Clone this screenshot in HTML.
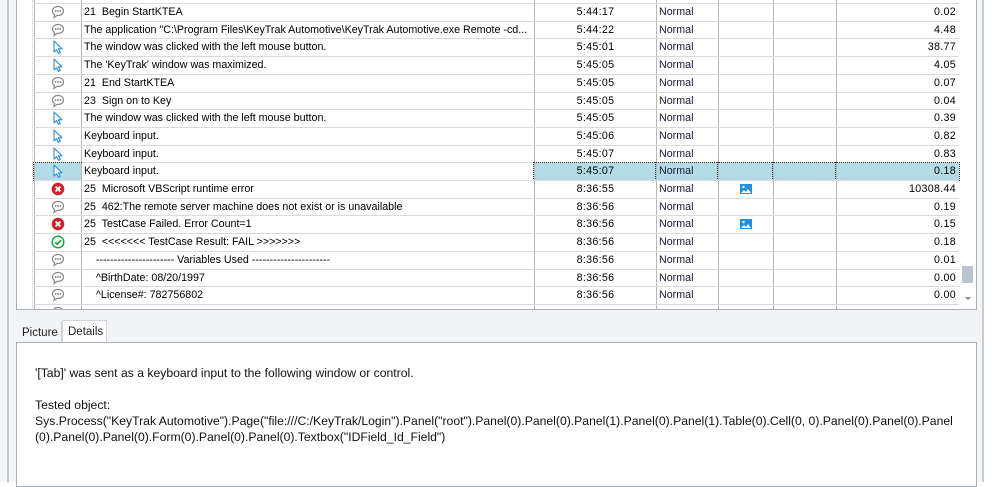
<!DOCTYPE html>
<html><head><style>
*{margin:0;padding:0;box-sizing:border-box}
body{width:999px;height:482px;background:#fff;position:relative;overflow:hidden;font-family:"Liberation Sans",sans-serif;font-size:10.7px;color:#000}
.bg{position:absolute;left:0;top:0;width:984px;height:482px;background:#f3f4f6;border-right:2px solid #c9ccd2}
.vl{position:absolute;left:7px;top:0;width:2px;height:482px;background:#c9ccd2}
.grid{position:absolute;left:16px;top:0;width:961px;height:310px;background:#fff;border:1px solid #a9b0ba;border-top:none;overflow:hidden}
.tree{position:absolute;left:0;top:0;width:16px;height:310px;background:#fff;border-right:1px dotted #ccc}
.r{position:absolute;left:17px;width:925px;height:18px;border-top:1px solid #dadada}
.r div{position:absolute;top:0;height:17px;line-height:17px;border-left:1px solid #b8b8b8;white-space:nowrap;overflow:hidden;text-overflow:ellipsis}
.c0{left:0;width:47px;border-left:1px solid #b8b8b8;text-align:center}
.c1{left:47px;width:453px;padding-left:2px;padding-right:6px}
.c2{left:500px;width:122px;text-align:center;letter-spacing:.3px}
.c3{left:622px;width:62px;padding-left:2px;color:#1a1a3a}
.c4{left:684px;width:55px;text-align:center}
.c5{left:739px;width:63px}
.c6{left:802px;width:123px;text-align:right;padding-right:3px;letter-spacing:.3px}
.sel{background:#b3dce6;outline:1px dotted #333}
.tabs{position:absolute;top:320px;height:23px;font-size:11.5px;line-height:22px}
.det{position:absolute;left:16px;top:342px;width:961px;height:145px;background:#fff;border:1px solid #a9b0ba;font-size:12.2px;color:#111;padding:22px 18px;line-height:16px}
</style></head><body>
<div class="bg"></div><div class="vl"></div>
<div class="grid">
<div class="tree"></div>
<svg width="0" height="0" style="position:absolute"><defs>
<symbol id="b" viewBox="0 0 14 14"><path d="M7 1.5C3.6 1.5 1.5 3.4 1.5 6c0 1.5.8 2.7 2 3.5L3 12.5 6.2 10.4H7c3.4 0 5.5-1.9 5.5-4.4S10.4 1.5 7 1.5z" fill="#fff" stroke="#888" stroke-width="1.2"/><circle cx="4.6" cy="6" r=".9" fill="#777"/><circle cx="7" cy="6" r=".9" fill="#777"/><circle cx="9.4" cy="6" r=".9" fill="#777"/></symbol>
<symbol id="m" viewBox="0 0 14 14"><path d="M3 1v11l2.6-2.4 1.9 3.8 1.8-.9-1.9-3.7H11z" fill="#fff" stroke="#2a8ee0" stroke-width="1.1" stroke-linejoin="round"/></symbol>
<symbol id="x" viewBox="0 0 14 14"><circle cx="7" cy="7" r="6.3" fill="#d0202a"/><path d="M4.6 4.6l4.8 4.8M9.4 4.6l-4.8 4.8" stroke="#fff" stroke-width="2"/></symbol>
<symbol id="k" viewBox="0 0 14 14"><circle cx="7" cy="7" r="5.8" fill="#fff" stroke="#1fa83a" stroke-width="1.5"/><path d="M4.2 7.2l2 2 3.8-4" stroke="#1fa83a" stroke-width="1.8" fill="none"/></symbol>
<symbol id="p" viewBox="0 0 12 10"><rect width="12" height="10" fill="#1e90e0"/><circle cx="3.5" cy="3" r="1.2" fill="#fff"/><path d="M1 9l3-3 2 2 2-3 3 4z" fill="#fff"/></symbol>
</defs></svg>
<div class="r" style="top:-15px"><div class="c0"></div><div class="c1"></div><div class="c2"></div><div class="c3"></div><div class="c4"></div><div class="c5"></div><div class="c6"></div></div>
<div class="r" style="top:3px"><div class="c0"><svg width="14" height="14" style="margin-top:1px"><use href="#b"/></svg></div><div class="c1">21&nbsp; Begin StartKTEA</div><div class="c2">5:44:17</div><div class="c3">Normal</div><div class="c4"></div><div class="c5"></div><div class="c6">0.02</div></div>
<div class="r" style="top:20.7px"><div class="c0"><svg width="14" height="14" style="margin-top:1px"><use href="#b"/></svg></div><div class="c1">The application "C:\Program Files\KeyTrak Automotive\KeyTrak Automotive.exe Remote -cd...</div><div class="c2">5:44:22</div><div class="c3">Normal</div><div class="c4"></div><div class="c5"></div><div class="c6">4.48</div></div>
<div class="r" style="top:38.4px"><div class="c0"><svg width="14" height="14" style="margin-top:1px"><use href="#m"/></svg></div><div class="c1">The window was clicked with the left mouse button.</div><div class="c2">5:45:01</div><div class="c3">Normal</div><div class="c4"></div><div class="c5"></div><div class="c6">38.77</div></div>
<div class="r" style="top:56.1px"><div class="c0"><svg width="14" height="14" style="margin-top:1px"><use href="#m"/></svg></div><div class="c1">The 'KeyTrak' window was maximized.</div><div class="c2">5:45:05</div><div class="c3">Normal</div><div class="c4"></div><div class="c5"></div><div class="c6">4.05</div></div>
<div class="r" style="top:73.8px"><div class="c0"><svg width="14" height="14" style="margin-top:1px"><use href="#b"/></svg></div><div class="c1">21&nbsp; End StartKTEA</div><div class="c2">5:45:05</div><div class="c3">Normal</div><div class="c4"></div><div class="c5"></div><div class="c6">0.07</div></div>
<div class="r" style="top:91.5px"><div class="c0"><svg width="14" height="14" style="margin-top:1px"><use href="#b"/></svg></div><div class="c1">23&nbsp; Sign on to Key</div><div class="c2">5:45:05</div><div class="c3">Normal</div><div class="c4"></div><div class="c5"></div><div class="c6">0.04</div></div>
<div class="r" style="top:109.2px"><div class="c0"><svg width="14" height="14" style="margin-top:1px"><use href="#m"/></svg></div><div class="c1">The window was clicked with the left mouse button.</div><div class="c2">5:45:05</div><div class="c3">Normal</div><div class="c4"></div><div class="c5"></div><div class="c6">0.39</div></div>
<div class="r" style="top:126.9px"><div class="c0"><svg width="14" height="14" style="margin-top:1px"><use href="#m"/></svg></div><div class="c1">Keyboard input.</div><div class="c2">5:45:06</div><div class="c3">Normal</div><div class="c4"></div><div class="c5"></div><div class="c6">0.82</div></div>
<div class="r" style="top:144.6px"><div class="c0"><svg width="14" height="14" style="margin-top:1px"><use href="#m"/></svg></div><div class="c1">Keyboard input.</div><div class="c2">5:45:07</div><div class="c3">Normal</div><div class="c4"></div><div class="c5"></div><div class="c6">0.83</div></div>
<div class="r" style="top:162.3px"><div class="c0 sel"><svg width="14" height="14" style="margin-top:1px"><use href="#m"/></svg></div><div class="c1">Keyboard input.</div><div class="c2 sel">5:45:07</div><div class="c3 sel">Normal</div><div class="c4 sel"></div><div class="c5 sel"></div><div class="c6 sel">0.18</div></div>
<div class="r" style="top:180px"><div class="c0"><svg width="14" height="14" style="margin-top:1px"><use href="#x"/></svg></div><div class="c1">25&nbsp; Microsoft VBScript runtime error</div><div class="c2">8:36:55</div><div class="c3">Normal</div><div class="c4"><svg width="12" height="10" style="margin-top:3px"><use href="#p"/></svg></div><div class="c5"></div><div class="c6">10308.44</div></div>
<div class="r" style="top:197.7px"><div class="c0"><svg width="14" height="14" style="margin-top:1px"><use href="#b"/></svg></div><div class="c1">25&nbsp; 462:The remote server machine does not exist or is unavailable</div><div class="c2">8:36:56</div><div class="c3">Normal</div><div class="c4"></div><div class="c5"></div><div class="c6">0.19</div></div>
<div class="r" style="top:215.4px"><div class="c0"><svg width="14" height="14" style="margin-top:1px"><use href="#x"/></svg></div><div class="c1">25&nbsp; TestCase Failed. Error Count=1</div><div class="c2">8:36:56</div><div class="c3">Normal</div><div class="c4"><svg width="12" height="10" style="margin-top:3px"><use href="#p"/></svg></div><div class="c5"></div><div class="c6">0.15</div></div>
<div class="r" style="top:233.1px"><div class="c0"><svg width="14" height="14" style="margin-top:1px"><use href="#k"/></svg></div><div class="c1">25&nbsp; &lt;&lt;&lt;&lt;&lt;&lt;&lt; TestCase Result: FAIL &gt;&gt;&gt;&gt;&gt;&gt;&gt;</div><div class="c2">8:36:56</div><div class="c3">Normal</div><div class="c4"></div><div class="c5"></div><div class="c6">0.18</div></div>
<div class="r" style="top:250.8px"><div class="c0"><svg width="14" height="14" style="margin-top:1px"><use href="#b"/></svg></div><div class="c1">&nbsp;&nbsp;&nbsp;&nbsp;---------------------- Variables Used ----------------------</div><div class="c2">8:36:56</div><div class="c3">Normal</div><div class="c4"></div><div class="c5"></div><div class="c6">0.01</div></div>
<div class="r" style="top:268.5px"><div class="c0"><svg width="14" height="14" style="margin-top:1px"><use href="#b"/></svg></div><div class="c1">&nbsp;&nbsp;&nbsp;&nbsp;^BirthDate: 08/20/1997</div><div class="c2">8:36:56</div><div class="c3">Normal</div><div class="c4"></div><div class="c5"></div><div class="c6">0.00</div></div>
<div class="r" style="top:286.2px"><div class="c0"><svg width="14" height="14" style="margin-top:1px"><use href="#b"/></svg></div><div class="c1">&nbsp;&nbsp;&nbsp;&nbsp;^License#: 782756802</div><div class="c2">8:36:56</div><div class="c3">Normal</div><div class="c4"></div><div class="c5"></div><div class="c6">0.00</div></div>
<div class="r" style="top:303.9px"><div class="c0"><svg width="14" height="14" style="margin-top:1px"><use href="#b"/></svg></div><div class="c1"></div><div class="c2"></div><div class="c3"></div><div class="c4"></div><div class="c5"></div><div class="c6"></div></div>
</div>
<div style="position:absolute;left:962px;top:266px;width:11px;height:17px;background:#bcc3cc"></div>
<div style="position:absolute;left:965px;top:297px;width:0;height:0;border-left:3px solid transparent;border-right:3px solid transparent;border-top:3px solid #888"></div>
<div class="tabs" style="left:17px;width:45px;padding-left:5px;top:322px;height:20px;color:#222;border-right:1px solid #d0d0d0">Picture</div>
<div class="tabs" style="left:62px;width:45px;background:#fff;border:1px solid #d0d4da;border-bottom:none;padding-left:5px;color:#222">Details</div>
<div class="det">'[Tab]' was sent as a keyboard input to the following window or control.<br><br>Tested object:<br>Sys.Process("KeyTrak Automotive").Page("file:///C:/KeyTrak/Login").Panel("root").Panel(0).Panel(0).Panel(1).Panel(0).Panel(1).Table(0).Cell(0, 0).Panel(0).Panel(0).Panel<br>(0).Panel(0).Panel(0).Form(0).Panel(0).Panel(0).Textbox("IDField_Id_Field")</div>
</body></html>
